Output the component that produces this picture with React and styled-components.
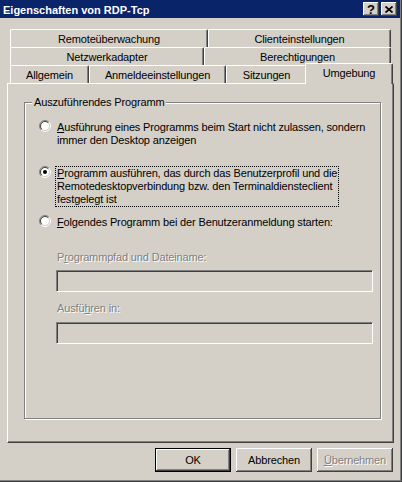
import React from "react"
import styled, { createGlobalStyle } from "styled-components"

const GlobalStyle = createGlobalStyle`
  html, body {
    margin: 0;
    padding: 0;
    background: #d4d0c8;
  }
  body {
    font-family: "Liberation Sans", Arial, sans-serif;
    font-size: 11px;
    letter-spacing: -0.15px;
    color: #000;
  }
`

const Frame = styled.div`
  width: 402px;
  height: 482px;
  box-sizing: border-box;
  border-right: 1px solid #404040;
  border-bottom: 1px solid #404040;
`

const Client = styled.div`
  height: 100%;
  box-sizing: border-box;
  border-right: 1px solid #808080;
  border-bottom: 1px solid #808080;
  display: flex;
  flex-direction: column;
  background: #d4d0c8;
`

const TitleBar = styled.div`
  height: 18px;
  display: flex;
  align-items: center;
  padding: 0 3px;
  background: #0a246a;
  color: #fff;
`

const Title = styled.div`
  flex: 1;
  font-weight: bold;
  font-size: 11px;
  letter-spacing: 0;
  padding-top: 1px;
`

const CaptionButtons = styled.div`
  display: flex;
  gap: 2px;
`

const CaptionButton = styled.div`
  width: 16px;
  height: 14px;
  box-sizing: border-box;
  display: flex;
  align-items: center;
  justify-content: center;
  background: #d4d0c8;
  color: #000;
  font-weight: bold;
  font-size: 13px;
  box-shadow: inset -1px -1px 0 #404040, inset 1px 1px 0 #fff,
    inset -2px -2px 0 #808080;
`

const Body = styled.div`
  padding: 11px 0 0 7px;
`

const TabStrip = styled.div`
  padding-left: 3px;
`

const TabRow = styled.div`
  display: flex;
  align-items: flex-start;
  height: 18px;
`

const Tab = styled.div`
  width: ${(p) => p.$w}px;
  height: 18px;
  box-sizing: border-box;
  border-top: 1px solid #fff;
  border-left: 1px solid #fff;
  border-right: 1px solid #404040;
  border-radius: 2px 2px 0 0;
  box-shadow: inset -1px 0 0 #808080;
  background: #d4d0c8;
  display: flex;
  align-items: center;
  justify-content: center;
  padding-top: 1px;
  white-space: nowrap;

  &.active {
    height: 21px;
    margin: -2px 0 -1px -2px;
    position: relative;
    z-index: 1;
    padding-top: 0;
    padding-bottom: 3px;
  }
`

const Panel = styled.div`
  width: 387px;
  height: 360px;
  box-sizing: border-box;
  border-top: 1px solid #fff;
  border-left: 1px solid #fff;
  border-right: 1px solid #404040;
  border-bottom: 1px solid #404040;
  box-shadow: inset -1px -1px 0 #808080;
  padding: 18px 0 0 16px;
`

const GroupBox = styled.div`
  position: relative;
  width: 357px;
  height: 317px;
  box-sizing: border-box;
  border: 1px solid #808080;
  box-shadow: inset 1px 1px 0 #fff, 1px 1px 0 #fff;
  padding: 17px 0 0 14px;
`

const Legend = styled.span`
  position: absolute;
  top: -7px;
  left: 7px;
  padding: 0 2px;
  line-height: 13px;
  background: #d4d0c8;
`

const RadioRow = styled.div`
  display: flex;
  align-items: flex-start;
  margin-top: ${(p) => p.$mt || 0}px;
`

const RadioSvg = styled.svg`
  flex: none;
  width: 12px;
  height: 12px;
  margin-right: 4px;
`

const OptionLabel = styled.div`
  border: 1px dotted ${(p) => (p.$focus ? "#000" : "transparent")};
  padding: 0 1px;
  line-height: 13px;
  white-space: nowrap;

  u {
    text-decoration: underline;
  }
`

const Fields = styled.div`
  margin-left: 17px;
`

const FieldLabel = styled.div`
  margin-top: ${(p) => p.$mt}px;
  padding-left: 1px;
  line-height: 13px;
  color: #808080;
  text-shadow: 1px 1px 0 #fff;
`

const Edit = styled.div`
  margin-top: ${(p) => p.$mt}px;
  width: 317px;
  height: 22px;
  box-sizing: border-box;
  border: 1px solid;
  border-color: #808080 #fff #fff #808080;
  box-shadow: inset 1px 1px 0 #404040, inset -1px -1px 0 #d4d0c8;
  background: #d4d0c8;
`

const ButtonRow = styled.div`
  display: flex;
  gap: 5px;
  margin-top: 5px;
  padding-left: 148px;
`

const PushButton = styled.div`
  width: 76px;
  height: 24px;
  box-sizing: border-box;
  display: flex;
  align-items: center;
  justify-content: center;
  background: #d4d0c8;
  border: ${(p) => (p.$default ? "1px solid #000" : "none")};
  box-shadow: inset -1px -1px 0 #404040, inset 1px 1px 0 #fff,
    inset -2px -2px 0 #808080;
  color: ${(p) => (p.$disabled ? "#808080" : "#000")};
  text-shadow: ${(p) => (p.$disabled ? "1px 1px 0 #fff" : "none")};
`

const Radio = ({ checked }) => (
  <RadioSvg viewBox="0 0 12 12">
    <circle cx="6" cy="6" r="4.5" fill="#fff" />
    <path d="M2.1 9.9 A5.5 5.5 0 0 1 9.9 2.1" fill="none" stroke="#808080" strokeWidth="1" />
    <path d="M9.9 2.1 A5.5 5.5 0 0 1 2.1 9.9" fill="none" stroke="#fff" strokeWidth="1" />
    <path d="M2.8 9.2 A4.5 4.5 0 0 1 9.2 2.8" fill="none" stroke="#404040" strokeWidth="1" />
    <path d="M9.2 2.8 A4.5 4.5 0 0 1 2.8 9.2" fill="none" stroke="#d4d0c8" strokeWidth="1" />
    {checked && <circle cx="6" cy="6" r="2" fill="#000" />}
  </RadioSvg>
)

const CloseGlyph = () => (
  <svg width="8" height="7" viewBox="0 0 8 7">
    <path d="M0.5 0.5 L7.5 6.5 M7.5 0.5 L0.5 6.5" stroke="#000" strokeWidth="1.7" />
  </svg>
)

const App = () => {
  return (
    <>
      <GlobalStyle />
      <Frame>
        <Client>
          <TitleBar>
            <Title>Eigenschaften von RDP-Tcp</Title>
            <CaptionButtons>
              <CaptionButton>?</CaptionButton>
              <CaptionButton>
                <CloseGlyph />
              </CaptionButton>
            </CaptionButtons>
          </TitleBar>
          <Body>
            <TabStrip>
              <TabRow>
                <Tab $w={198}>Remoteüberwachung</Tab>
                <Tab $w={183}>Clienteinstellungen</Tab>
              </TabRow>
              <TabRow>
                <Tab $w={194}>Netzwerkadapter</Tab>
                <Tab $w={187}>Berechtigungen</Tab>
              </TabRow>
              <TabRow>
                <Tab $w={79}>Allgemein</Tab>
                <Tab $w={137}>Anmeldeeinstellungen</Tab>
                <Tab $w={81}>Sitzungen</Tab>
                <Tab $w={88} className="active">
                  Umgebung
                </Tab>
              </TabRow>
            </TabStrip>
            <Panel>
              <GroupBox>
                <Legend>Auszuführendes Programm</Legend>
                <RadioRow>
                  <Radio />
                  <OptionLabel>
                    <u>A</u>usführung eines Programms beim Start nicht zulassen, sondern
                    <br />
                    immer den Desktop anzeigen
                  </OptionLabel>
                </RadioRow>
                <RadioRow $mt={18}>
                  <Radio checked />
                  <OptionLabel $focus>
                    <u>P</u>rogramm ausführen, das durch das Benutzerprofil und die
                    <br />
                    Remotedesktopverbindung bzw. den Terminaldiensteclient
                    <br />
                    festgelegt ist
                  </OptionLabel>
                </RadioRow>
                <RadioRow $mt={8}>
                  <Radio />
                  <OptionLabel>
                    <u>F</u>olgendes Programm bei der Benutzeranmeldung starten:
                  </OptionLabel>
                </RadioRow>
                <Fields>
                  <FieldLabel $mt={21}>
                    P<u>r</u>ogrammpfad und Dateiname:
                  </FieldLabel>
                  <Edit $mt={6} />
                  <FieldLabel $mt={10}>
                    Ausfü<u>h</u>ren in:
                  </FieldLabel>
                  <Edit $mt={7} />
                </Fields>
              </GroupBox>
            </Panel>
            <ButtonRow>
              <PushButton $default>OK</PushButton>
              <PushButton>Abbrechen</PushButton>
              <PushButton $disabled>
                <u>Ü</u>bernehmen
              </PushButton>
            </ButtonRow>
          </Body>
        </Client>
      </Frame>
    </>
  )
}

export default App
